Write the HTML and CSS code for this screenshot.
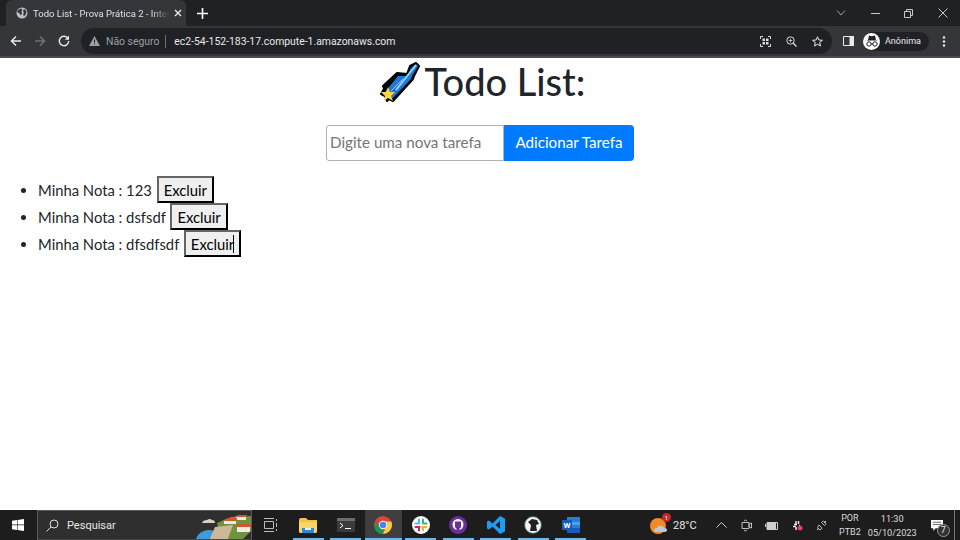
FILE: index.html
```html
<!DOCTYPE html>
<html lang="pt">
<head>
    <meta charset="UTF-8">
    <title>Todo List - Prova Prática 2</title>
    <link rel="stylesheet" href="styles.css">
</head>
<body>

    <div class="tabstrip">
        <div class="tab">
            <svg class="tab-globe" width="12" height="12" viewBox="0 0 12 12"><circle cx="6" cy="6" r="5.500" fill="#bdc1c6"/><path d="M2 3l3-1.500 1.500 1-1 1.500L6 6 5 8.500 3 6 1 5zM8 2l2.500 2L10 7 8 9.500 7 7 8 6 7 4z" fill="#35363a"/></svg>
            <span class="tab-title">Todo List - Prova Prática 2 - Intel</span>
            <svg class="tab-close" width="8" height="8" viewBox="0 0 8 8"><path d="M1 1l6 6M7 1L1 7" stroke="#e8eaed" stroke-width="1.400"/></svg>
        </div>
        <svg class="tab-new" width="11" height="11" viewBox="0 0 11 11"><path d="M5.500 0v11M0 5.500h11" stroke="#fff" stroke-width="1.600"/></svg>
        <div class="window-btns">
            <svg width="10" height="6" viewBox="0 0 10 6"><path d="M1 .5l4 4.500 4-4.500" fill="none" stroke="#9aa0a6"/></svg>
            <svg width="9" height="1" viewBox="0 0 9 1"><path d="M0 .5h9" stroke="#c8c8c8"/></svg>
            <svg width="9" height="9" viewBox="0 0 9 9"><path d="M.5 2.500h6v6h-6zM2.500 2.500v-2h6v6h-2" fill="none" stroke="#c8c8c8"/></svg>
            <svg width="10" height="10" viewBox="0 0 10 10"><path d="M.5.5l9 9M9.500.5l-9 9" stroke="#c8c8c8"/></svg>
        </div>
    </div>

    <div class="toolbar">
        <div class="nav-btns">
            <svg width="12" height="12" viewBox="0 0 12 12"><path d="M11 6H2M6 1.500L1.500 6 6 10.500" fill="none" stroke="#e8eaed" stroke-width="1.500"/></svg>
            <svg width="12" height="12" viewBox="0 0 12 12"><path d="M1 6h9M6 1.500L10.500 6 6 10.500" fill="none" stroke="#6f7275" stroke-width="1.500"/></svg>
            <svg width="12" height="12" viewBox="0 0 12 12"><path d="M10 3.500A4.700 4.700 0 1 0 10.700 6" fill="none" stroke="#e8eaed" stroke-width="1.400"/><path d="M11 .5v4.200H6.800z" fill="#e8eaed"/></svg>
        </div>
        <div class="omnibox">
            <svg width="11" height="10" viewBox="0 0 11 10"><path d="M5.500 0L11 10H0z" fill="#9aa0a6"/><path d="M5.500 3.500v3M5.500 7.500v1" stroke="#202124"/></svg>
            <span class="inseguro">Não seguro</span>
            <span class="omni-sep"></span>
            <span class="url">ec2-54-152-183-17.compute-1.amazonaws.com</span>
            <div class="omni-icons">
                <svg width="11" height="11" viewBox="0 0 11 11"><path d="M.5 3V.5H3M8 .5h2.500V3M10.500 8v2.500H8M3 10.500H.5V8" fill="none" stroke="#dadce0"/><path d="M2.500 2.500h2.500v2.500H2.500zM6 2.500h2.500v2.500H6zM2.500 6h2.500v2.500H2.500zM6 6h2.500v2.500H6z" fill="#dadce0"/></svg>
                <svg width="11" height="11" viewBox="0 0 11 11"><circle cx="4.500" cy="4.500" r="3.700" fill="none" stroke="#dadce0"/><path d="M7.300 7.300l3.200 3.200" stroke="#dadce0" stroke-width="1.300"/><path d="M2.700 4.500h3.600M4.500 2.700v3.600" stroke="#dadce0" stroke-width=".8"/></svg>
                <svg width="11" height="11" viewBox="0 0 11 11"><path d="M5.500.8l1.400 3.200 3.500.3-2.700 2.300.8 3.400-3-1.800-3 1.800.8-3.400L.6 4.300l3.500-.3z" fill="none" stroke="#e8eaed"/></svg>
            </div>
        </div>
        <svg class="side-panel" width="11" height="10" viewBox="0 0 11 10"><path d="M.5.500h10v9H.5z" fill="#35363a" stroke="#e8eaed"/><path d="M6.500 0H11v10H6.500z" fill="#e8eaed"/></svg>
        <div class="perfil">
            <span class="perfil-icon">
                <svg width="18" height="18" viewBox="0 0 18 18"><path d="M3 8.500h12L13 8l-1-4.500-3 .7-3-.7L5 8z" fill="#202124"/><circle cx="6" cy="12" r="2.200" fill="none" stroke="#202124"/><circle cx="12" cy="12" r="2.200" fill="none" stroke="#202124"/><path d="M8 12h2" stroke="#202124"/></svg>
            </span>
            <span>Anônima</span>
        </div>
        <svg class="menu-dots" width="4" height="11" viewBox="0 0 4 11"><circle cx="2" cy="1.500" r="1.200" fill="#e8eaed"/><circle cx="2" cy="5.500" r="1.200" fill="#e8eaed"/><circle cx="2" cy="9.500" r="1.200" fill="#e8eaed"/></svg>
    </div>

    <div class="pagina">
        <h1>
            <svg class="cometa" width="40" height="44" viewBox="0 0 40 44">
                <path d="M36 2l3 3-5 10-1 3-20 22-4-2-2 2-2-5-4-2 3-5-1-3 14-13 10 1 3-8z" fill="#000" stroke="#000" stroke-width="2" stroke-linejoin="round"/>
                <path d="M36 3l2 2-6 10-1 3-19 20-7-7 13-16h9l4-8z" fill="#1b7ad6"/>
                <path d="M36 4L16 29" stroke="#8fd6f7" stroke-width="2"/>
                <path d="M23 18L11 30" stroke="#c8a8ee" stroke-width="1"/>
                <path d="M8 26l2 5h5l-4 4 2 5-5-3-4 3 1-5-4-4h5z" fill="#fcd53f"/>
            </svg>
            <span>Todo List:</span>
        </h1>
        <form class="form-tarefa">
            <input class="campo" type="text" placeholder="Digite uma nova tarefa">
            <button class="boton-adicionar" type="button">Adicionar Tarefa</button>
        </form>
        <ul class="lista">
            <li>Minha Nota : 123 <button class="boton-excluir" type="button">Excluir</button></li>
            <li>Minha Nota : dsfsdf <button class="boton-excluir" type="button">Excluir</button></li>
            <li>Minha Nota : dfsdfsdf <button class="boton-excluir cursor" type="button">Excluir</button></li>
        </ul>
    </div>

    <div class="taskbar">
        <svg class="win-logo" width="12" height="12" viewBox="0 0 12 12"><path d="M0 1.700L5 1v4.600H0zM5.600.9L12 0v5.600H5.600zM0 6.300h5V11l-5-.7zM5.600 6.300H12V12l-6.400-.9z" fill="#fff"/></svg>
        <div class="busca">
            <svg width="13" height="13" viewBox="0 0 13 13"><circle cx="8" cy="5" r="4" fill="none" stroke="#e0e0e0"/><path d="M5 8l-4.500 4.500" stroke="#e0e0e0"/></svg>
            <span>Pesquisar</span>
            <svg class="busca-arte" width="60" height="30" viewBox="0 0 60 30">
                <path d="M11 12q1-3 5-3 3-2 5 0 3 0 3 3z" fill="#d8cfc0"/>
                <circle cx="18" cy="33" r="14" fill="#3f9ad8"/>
                <path d="M26 12l14-6 20-1v15l-10 10H30z" fill="#6f9440"/>
                <path d="M24 16l18-2-6 16H18z" fill="#cdb998"/>
                <path d="M33 10h12v3H33zM45 6h10v3H45zM46 16h13v5H46z" fill="#efece2"/>
                <path d="M31 10l6-3h9v3zM43 6l4-2h9v2zM44 16l4-3h13v3z" fill="#cc5a30"/>
            </svg>
        </div>
        <div class="task-apps">
            <div class="app">
                <svg width="15" height="14" viewBox="0 0 15 14"><path d="M1 .5h10M1 13.500h10M1.500 3.500h9v7h-9z" fill="none" stroke="#bdbdbd"/><path d="M13.500 1v2M13.500 5v4M13.500 11v2" stroke="#bdbdbd"/></svg>
            </div>
            <div class="app aberto">
                <svg width="18" height="15" viewBox="0 0 18 15"><path d="M0 2q0-2 2-2h5l2 2h9v11q0 2-2 2H2q-2 0-2-2z" fill="#f5c342"/><path d="M0 4h18v9q0 2-2 2H2q-2 0-2-2z" fill="#fbd46a"/><path d="M3 10h12v5H3z" fill="#2a8bd6"/><path d="M6 10h6v2H6z" fill="#f5f0d8"/></svg>
            </div>
            <div class="app aberto">
                <svg width="18" height="14" viewBox="0 0 18 14"><path d="M0 0h18v14H0z" fill="#3b3b3b"/><path d="M0 0h18v3H0z" fill="#6d6d6d"/><path d="M3 5l3 2.500L3 10" fill="none" stroke="#fff"/><path d="M8 10.500h6" stroke="#fff"/></svg>
            </div>
            <div class="app aberto ativo">
                <svg width="18" height="18" viewBox="0 0 18 18"><circle cx="9" cy="9" r="9" fill="#db4437"/><path d="M9 18a9 9 0 0 1-7.800-4.500L1.200 4.500 5 11l4 2z" fill="#0f9d58"/><path d="M9 18a9 9 0 0 0 9-9c0-1.200-.2-2.300-.7-3.500H9l4 3z" fill="#ffcd40"/><circle cx="9" cy="9" r="4.200" fill="#fff"/><circle cx="9" cy="9" r="3.300" fill="#4285f4"/></svg>
            </div>
            <div class="app aberto">
                <svg width="18" height="18" viewBox="0 0 18 18"><circle cx="9" cy="9" r="9" fill="#fff"/><path d="M7 3.500v4" stroke="#36c5f0" stroke-width="2" stroke-linecap="round"/><path d="M11 3.500v4" stroke="#2eb67d" stroke-width="2" stroke-linecap="round"/><path d="M3.500 11h4" stroke="#e01e5a" stroke-width="2" stroke-linecap="round"/><path d="M10.500 11h4" stroke="#ecb22e" stroke-width="2" stroke-linecap="round"/><path d="M7 11v3.500" stroke="#e01e5a" stroke-width="2" stroke-linecap="round"/><path d="M11 11v3.500" stroke="#ecb22e" stroke-width="2" stroke-linecap="round"/><path d="M3.500 7.500h2" stroke="#36c5f0" stroke-width="2" stroke-linecap="round"/><path d="M12.500 7.500h2" stroke="#2eb67d" stroke-width="2" stroke-linecap="round"/></svg>
            </div>
            <div class="app aberto">
                <svg width="18" height="18" viewBox="0 0 18 18"><circle cx="9" cy="9" r="9" fill="#6e2d9e"/><circle cx="9" cy="8.500" r="5.500" fill="#fff"/><path d="M6 5.500h6v4.500q0 2-1.500 2.500v2h-3v-2Q6 12 6 10z" fill="#6e2d9e"/></svg>
            </div>
            <div class="app aberto">
                <svg width="18" height="18" viewBox="0 0 18 18"><path d="M13 0l5 2.500v13L13 18 5.500 10.500 2 13.500 0 12.500v-7L2 4.500 5.500 7.500zM13 5L8.500 9l4.500 4z" fill="#1f9cf0"/></svg>
            </div>
            <div class="app aberto">
                <svg width="18" height="18" viewBox="0 0 18 18"><circle cx="9" cy="9" r="8.500" fill="#f4f4f4" stroke="#2d5a5a"/><path d="M4 6l4-3 5 1 2 4-3 1 1 6H6l1-6z" fill="#222"/></svg>
            </div>
            <div class="app aberto">
                <svg width="18" height="16" viewBox="0 0 18 16"><path d="M5 0h13v16H5z" fill="#2b7cd3"/><path d="M5 5h13v3H5z" fill="#41a5ee"/><path d="M5 11h13v5H5z" fill="#185abd"/><path d="M0 3h10v10H0z" fill="#185abd"/><text x="5" y="11" class="word-w">W</text></svg>
            </div>
        </div>
        <div class="clima">
            <span class="clima-icon">
                <svg width="18" height="18" viewBox="0 0 18 18"><circle cx="8" cy="10" r="8" fill="#f08a24"/><path d="M7 16q-3 0-3-2t3-2q1-3 4-2 3 0 3 2 3 0 3 2t-3 2z" fill="#b9c9dc"/></svg>
                <span class="badge">1</span>
            </span>
            <span>28°C</span>
        </div>
        <div class="bandeja">
            <svg width="11" height="6" viewBox="0 0 11 6"><path d="M.5 5.500l5-5 5 5" fill="none" stroke="#cfcfcf"/></svg>
            <svg width="11" height="13" viewBox="0 0 11 13"><path d="M1 3.500h7v6H1zM8 5l2.500-1v5L8 8zM3 2q1.500-2 3 0M3 11q1.500 2 3 0" fill="none" stroke="#cfcfcf" stroke-width=".9"/></svg>
            <svg width="13" height="9" viewBox="0 0 13 9"><path d="M2 1.500h10.500v7H2zM.5 3v3" fill="none" stroke="#cfcfcf"/><path d="M2 1.500h9v7H2z" fill="#cfcfcf"/></svg>
            <svg width="11" height="11" viewBox="0 0 11 11"><path d="M2 4.500h3M4 1v3M6.500 1v3M4 7v3M1 6.500h3M7 5.500h1" stroke="#e8e8e8" stroke-width="1.500"/><circle cx="8" cy="8" r="2.500" fill="#e8386c"/></svg>
            <svg width="11" height="11" viewBox="0 0 11 11"><path d="M1 10l2-2M8 3l2-2M3 5l3 3-1 1.500q-1 .5-2 0l-1-1q-.5-1 0-2zM5.500 2.500l3 3 1-1q.5-1 0-2l-1-1q-1-.5-2 0z" fill="none" stroke="#cfcfcf" stroke-width=".9"/></svg>
        </div>
        <div class="idioma"><span>POR</span><span>PTB2</span></div>
        <div class="relogio"><span>11:30</span><span>05/10/2023</span></div>
        <div class="avisos">
            <svg width="12" height="11" viewBox="0 0 13 12"><path d="M0 0h13v9H5L2.500 12V9H0z" fill="#fff"/><path d="M2 2.500h9M2 5h9" stroke="#333" stroke-width=".8"/></svg>
            <span class="avisos-num">7</span>
        </div>
        <span class="mostrar-desktop"></span>
    </div>

</body>
</html>
```

FILE: styles.css
```css
* {
    box-sizing: border-box;
}
body {
    margin: 0;
    width: 960px;
    height: 540px;
    overflow: hidden;
    display: flex;
    flex-direction: column;
    background-color: #fff;
    font-family: Roboto, Arial, sans-serif;
    color: #212529;
}
svg {
    display: block;
    flex: none;
}

/* barra de abas */
.tabstrip {
    height: 26px;
    background-color: #202124;
    display: flex;
    align-items: center;
    font-size: 9px;
    color: #dee1e6;
}
.tab {
    width: 180px;
    height: 26px;
    margin-left: 6px;
    padding: 0 9px 0 10px;
    background-color: #35363a;
    border-radius: 6px 6px 0 0;
    display: flex;
    align-items: center;
    gap: 5px;
}
.tab-title {
    flex: 1;
    white-space: nowrap;
    font-size: 9.500px;
    -webkit-mask-image: linear-gradient(to right, #000 88%, transparent 100%);
    mask-image: linear-gradient(to right, #000 88%, transparent 100%);
}
.tab-new {
    margin-left: 11px;
}
.window-btns {
    margin-left: auto;
    width: 124px;
    padding-right: 12px;
    display: flex;
    align-items: center;
    justify-content: space-between;
}

/* barra de endereco */
.toolbar {
    height: 32px;
    background-color: #35363a;
    border-bottom: 2px solid #4a4b4f;
    display: flex;
    align-items: center;
}
.nav-btns {
    width: 81px;
    padding: 0 11px 0 10px;
    display: flex;
    justify-content: space-between;
}
.omnibox {
    width: 751px;
    height: 26px;
    background-color: #202124;
    border-radius: 13px;
    padding: 0 8px;
    display: flex;
    align-items: center;
    font-size: 10.400px;
}
.inseguro {
    color: #9aa0a6;
    margin-left: 6px;
}
.omni-sep {
    width: 1px;
    height: 13px;
    background-color: #6f7275;
    margin: 0 8px 0 6px;
}
.url {
    color: #e8eaed;
}
.omni-icons {
    margin-left: auto;
    width: 64px;
    padding-right: 1px;
    display: flex;
    justify-content: space-between;
}
.side-panel {
    margin-left: 11px;
}
.perfil {
    margin-left: 9px;
    height: 19px;
    width: 66px;
    background-color: #202124;
    border-radius: 10px;
    display: flex;
    align-items: center;
    gap: 5px;
    font-size: 9px;
    color: #e8eaed;
}
.perfil-icon {
    width: 17px;
    height: 17px;
    flex: none;
    border-radius: 50%;
    background-color: #fff;
    display: flex;
    align-items: center;
    justify-content: center;
}
.menu-dots {
    margin-left: 13px;
}

/* pagina */
.pagina {
    flex: 1;
    font-family: Lato, Arial, sans-serif;
}
h1 {
    margin: 0;
    height: 50px;
    padding-left: 5px;
    padding-bottom: 4px;
    display: flex;
    justify-content: center;
    align-items: center;
    gap: 5px;
    font-size: 38px;
    font-weight: 500;
    line-height: 48px;
}
.cometa {
    margin-top: 4px;
}
.form-tarefa {
    margin-top: 17px;
    display: flex;
    justify-content: center;
}
.campo {
    width: 178px;
    height: 36px;
    padding: 0 2px 2px 3px;
    border: 1px solid #b1b1b1;
    border-radius: 3px 0 0 3px;
    font-family: inherit;
    font-size: 15.200px;
}
.campo::placeholder {
    color: #757575;
}
.boton-adicionar {
    width: 130px;
    height: 36px;
    padding: 0 0 2px;
    border: none;
    border-radius: 0 4px 4px 0;
    background-color: #007bff;
    color: #fff;
    font-family: inherit;
    font-size: 15.200px;
}
.lista {
    margin: 15px 0 0;
    padding: 0 0 0 38px;
    font-size: 14.800px;
    line-height: 24px;
}
.lista li {
    height: 27px;
}
.boton-excluir {
    height: 27px;
    margin-left: 1px;
    padding: 0 5px;
    border: 2px outset #111;
    background-color: #efefef;
    color: #000;
    font-family: inherit;
    font-size: 14.800px;
}
.cursor {
    position: relative;
}
.cursor::after {
    content: "";
    position: absolute;
    right: 5px;
    top: 3px;
    width: 1px;
    height: 18px;
    background-color: #000;
}

/* barra de tarefas */
.taskbar {
    height: 30px;
    background-color: #1d1d1d;
    display: flex;
    align-items: center;
    color: #e8e8e8;
    font-size: 11px;
}
.win-logo {
    margin: 0 13px 0 12px;
}
.busca {
    width: 215px;
    height: 30px;
    background-color: #2f2f2f;
    border: 1px solid #5b5b5b;
    border-bottom-color: #474747;
    padding-left: 8px;
    display: flex;
    align-items: center;
    gap: 8px;
    position: relative;
    overflow: hidden;
}
.busca-arte {
    position: absolute;
    right: 0;
    top: 0;
}
.task-apps {
    display: flex;
    width: 337px;
}
.app {
    width: 37.500px;
    height: 30px;
    flex: none;
    display: flex;
    align-items: center;
    justify-content: center;
}
.app.aberto {
    background: linear-gradient(#6fb6ea, #6fb6ea) center bottom / 31px 2px no-repeat;
}
.app.ativo {
    background: linear-gradient(#6fb6ea, #6fb6ea) center bottom / 100% 2px no-repeat, #3f3f3f;
}
.word-w {
    fill: #fff;
    font-size: 8px;
    font-weight: 700;
    text-anchor: middle;
}
.clima {
    margin-left: 61px;
    width: 64px;
    display: flex;
    align-items: center;
    gap: 5px;
}
.clima-icon {
    position: relative;
}
.badge {
    position: absolute;
    right: -3px;
    top: -3px;
    width: 9px;
    height: 9px;
    border-radius: 50%;
    background-color: #c8272a;
    color: #fff;
    font-size: 6px;
    line-height: 9px;
    text-align: center;
}
.bandeja {
    width: 125px;
    padding-left: 2px;
    padding-right: 12px;
    display: flex;
    align-items: center;
    justify-content: space-between;
}
.idioma, .relogio {
    display: flex;
    flex-direction: column;
    align-items: center;
    gap: 1px;
    font-size: 9px;
    line-height: 13px;
    color: #dcdcdc;
}
.relogio {
    margin-left: 3.500px;
    width: 56px;
    font-size: 9.200px;
}
.avisos {
    margin-left: 10.500px;
    position: relative;
}
.avisos-num {
    position: absolute;
    right: -7px;
    bottom: -6px;
    width: 13px;
    height: 13px;
    border-radius: 50%;
    border: 1px solid #999;
    background-color: #333;
    font-size: 9px;
    line-height: 11px;
    text-align: center;
}
.mostrar-desktop {
    margin-left: auto;
    width: 6px;
    height: 30px;
    border-left: 1px solid #777;
}
```
